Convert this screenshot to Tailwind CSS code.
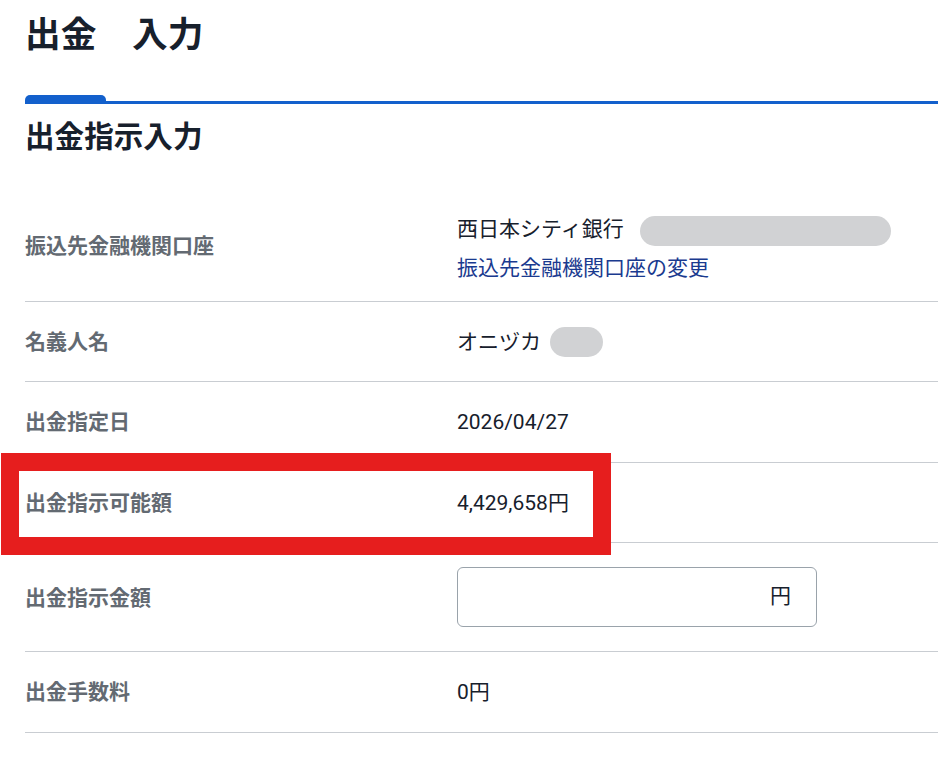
<!DOCTYPE html>
<html lang="ja">
  <head>
    <meta charset="UTF-8" />
    <meta name="viewport" content="width=device-width, initial-scale=1.0">
    <title>出金 入力</title>
    <script src="https://cdn.jsdelivr.net/npm/@tailwindcss/browser@4"></script>
  </head>
  <body class="bg-white overflow-hidden font-['Roboto','Noto_Sans_CJK_JP',sans-serif] text-[#17202c]">
    <div class="relative h-[778px] w-[938px] overflow-hidden pl-[25px]">
      <h1 class="h-[95px] pt-[9px] text-[35.7px] leading-[52px] font-bold">出金　入力</h1>

      <!-- tab line -->
      <div class="flex h-[9px] items-end">
        <div class="h-[9px] w-[81px] rounded-t-[5px] bg-[#1360cc]"></div>
        <div class="h-[3px] flex-1 bg-[#1360cc]"></div>
      </div>

      <h2 class="h-[78px] pt-[12px] text-[29.6px] leading-[42px] font-bold">出金指示入力</h2>

      <div class="flex h-[120px] items-center border-b border-[#c9cdd2] pt-[10px] text-[21px]">
        <div class="w-[432px] font-bold text-[#636a72]">振込先金融機関口座</div>
        <div class="mt-[4px] flex flex-col">
          <div class="flex h-[38px] items-center">
            <span>西日本シティ銀行</span>
            <span class="mt-[2px] ml-[16px] h-[30px] w-[251px] rounded-full bg-[#d1d2d4]"></span>
          </div>
          <a class="h-[38px] leading-[38px] text-[#1a3a8f]">振込先金融機関口座の変更</a>
        </div>
      </div>

      <div class="flex h-[80px] items-center border-b border-[#c9cdd2] pt-[2px] text-[21px]">
        <div class="w-[432px] font-bold text-[#636a72]">名義人名</div>
        <div class="flex items-center">
          <span>オニヅカ</span>
          <span class="-mt-[2px] ml-[9px] h-[30px] w-[53px] rounded-full bg-[#d1d2d4]"></span>
        </div>
      </div>

      <div class="flex h-[81px] items-center border-b border-[#c9cdd2] pt-[2px] text-[21px]">
        <div class="w-[432px] font-bold text-[#636a72]">出金指定日</div>
        <div>2026/04/27</div>
      </div>

      <div class="flex h-[80px] items-center border-b border-[#c9cdd2] pt-[2px] text-[21px]">
        <div class="w-[432px] font-bold text-[#636a72]">出金指示可能額</div>
        <div>4,429,658円</div>
      </div>

      <div class="flex h-[109px] items-center border-b border-[#c9cdd2] text-[21px]">
        <div class="mt-[4px] w-[432px] font-bold text-[#636a72]">出金指示金額</div>
        <div class="flex h-[60px] w-[360px] items-center justify-end rounded-[6px] border border-[#9aa3ab] pr-[25px]">円</div>
      </div>

      <div class="flex h-[81px] items-center border-b border-[#c9cdd2] pt-[2px] text-[21px]">
        <div class="w-[432px] font-bold text-[#636a72]">出金手数料</div>
        <div>0円</div>
      </div>

      <!-- annotation -->
      <div class="absolute top-[453px] left-[1px] h-[102px] w-[610px] border-[18px] border-[#e61e1e]"></div>
    </div>
  </body>
</html>
